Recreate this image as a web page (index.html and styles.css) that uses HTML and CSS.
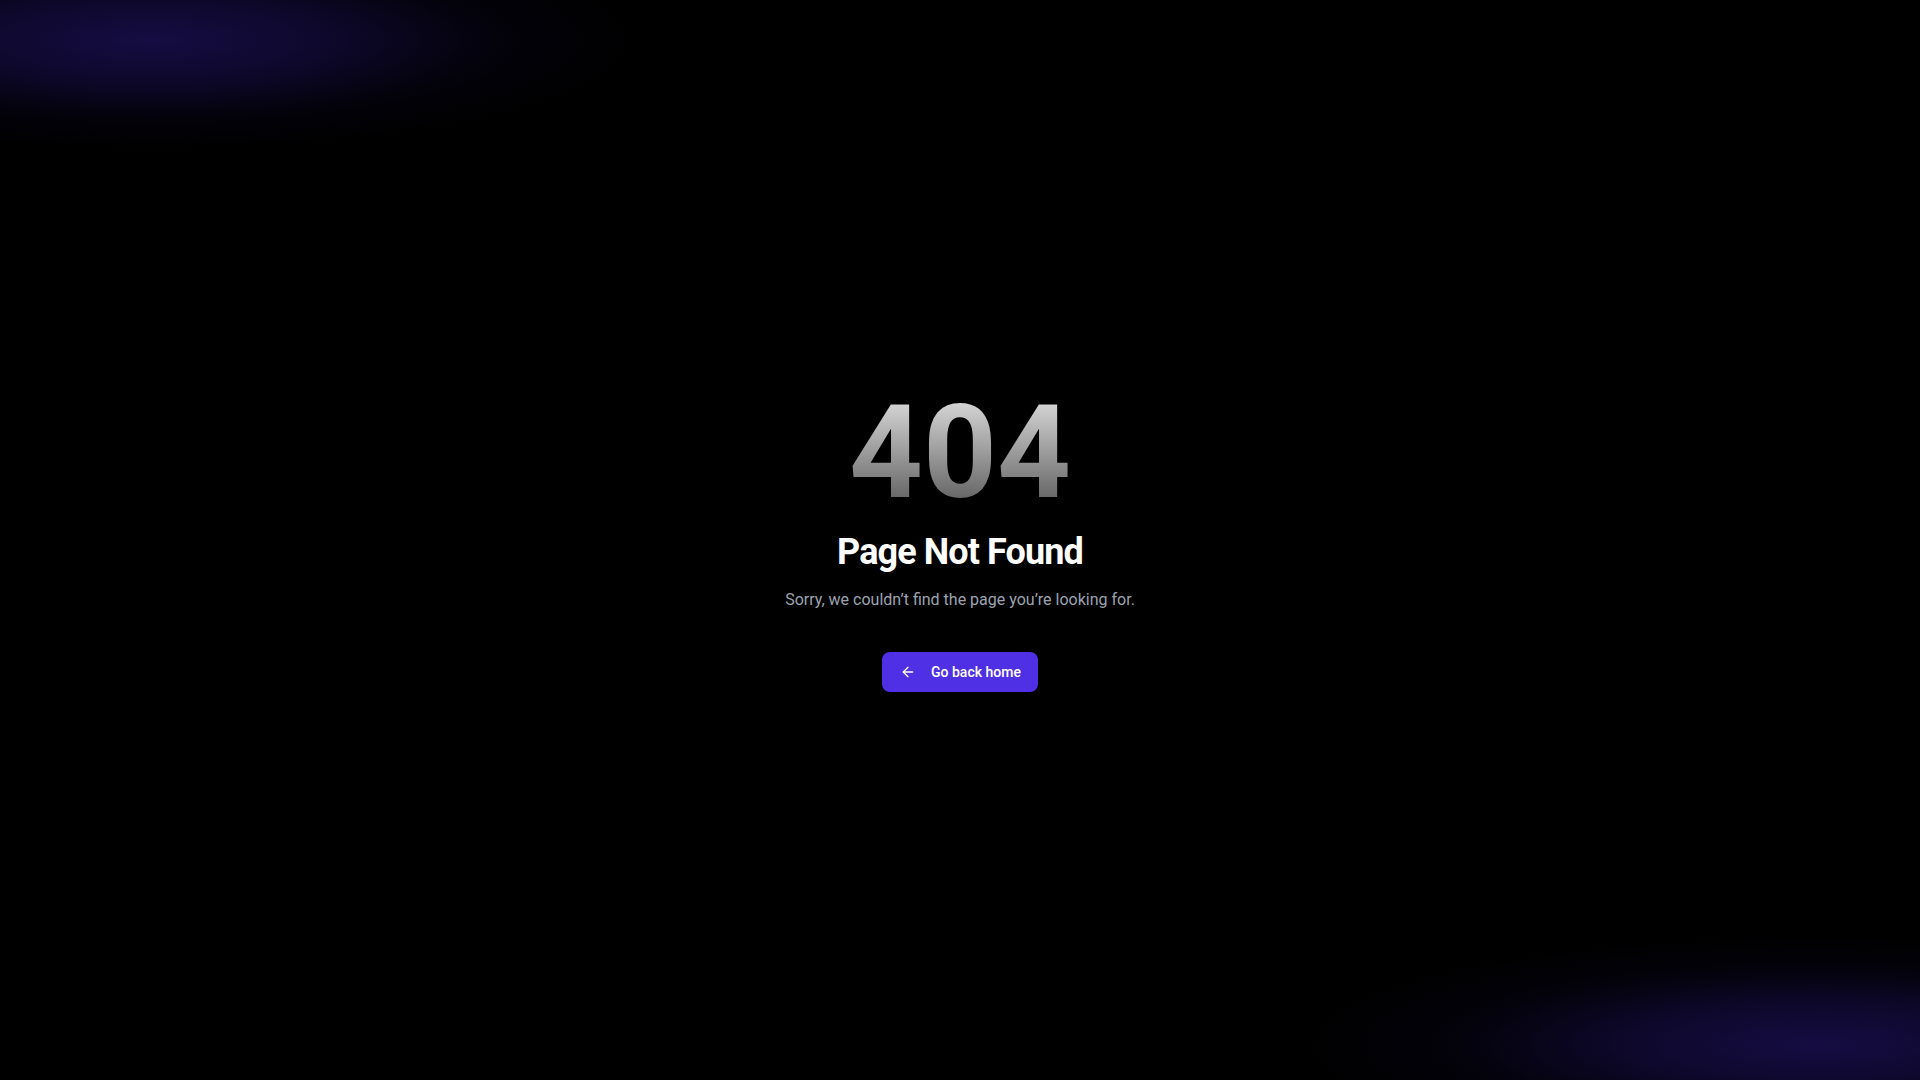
FILE: index.html
```html
<!DOCTYPE html>
<html lang="en">
<head>
<meta charset="utf-8">
<title>404 - Page Not Found</title>
<link rel="stylesheet" href="styles.css">
</head>
<body>
<main class="page">
  <h1 class="code">404</h1>
  <h2 class="title">Page Not Found</h2>
  <p class="text">Sorry, we couldn’t find the page you’re looking for.</p>
  <a class="btn" href="#">
    <svg class="btn-icon" viewBox="0 0 24 24" width="16" height="16" fill="none" stroke="currentColor" stroke-width="2" stroke-linecap="round" stroke-linejoin="round"><path d="m12 19-7-7 7-7"/><path d="M19 12H5"/></svg>
    <span>Go back home</span>
  </a>
</main>
</body>
</html>
```

FILE: styles.css
```css
html, body {
  margin: 0;
  padding: 0;
  height: 100%;
}

body {
  background-color: #000;
  background-image:
    radial-gradient(ellipse 490px 110px at 150px 40px, rgba(21, 12, 66, 1) 0%, rgba(18, 10, 56, 0.8) 35%, rgba(10, 5, 30, 0.35) 70%, rgba(0, 0, 0, 0) 100%),
    radial-gradient(ellipse 520px 110px at 1820px 1045px, rgba(21, 12, 66, 1) 0%, rgba(18, 10, 56, 0.8) 35%, rgba(10, 5, 30, 0.35) 70%, rgba(0, 0, 0, 0) 100%);
  background-repeat: no-repeat;
  font-family: Roboto, "Liberation Sans", Arial, sans-serif;
  color: #fff;
}

.page {
  min-height: 100vh;
  display: flex;
  flex-direction: column;
  align-items: center;
  justify-content: center;
  text-align: center;
}

.code {
  margin: 0;
  font-size: 129px;
  line-height: 1;
  font-weight: 700;
  background: linear-gradient(to bottom, #e5e5e5 0%, #525252 100%);
  -webkit-background-clip: text;
  background-clip: text;
  color: transparent;
  -webkit-text-fill-color: transparent;
}

.title {
  margin: 15px 0 0;
  font-size: 36px;
  line-height: 40px;
  font-weight: 700;
  color: #fff;
  letter-spacing: -0.9px;
}

.text {
  margin: 16px 0 0;
  font-size: 16px;
  line-height: 24px;
  color: #9ca3af;
}

.btn {
  margin-top: 40px;
  display: inline-flex;
  align-items: center;
  gap: 15px;
  height: 40px;
  box-sizing: border-box;
  padding: 0 17px 0 18px;
  background: #5030e5;
  color: #fff;
  border-radius: 8px;
  text-decoration: none;
  font-size: 14px;
  font-weight: 500;
}

.btn-icon {
  display: block;
  flex: none;
}
```
